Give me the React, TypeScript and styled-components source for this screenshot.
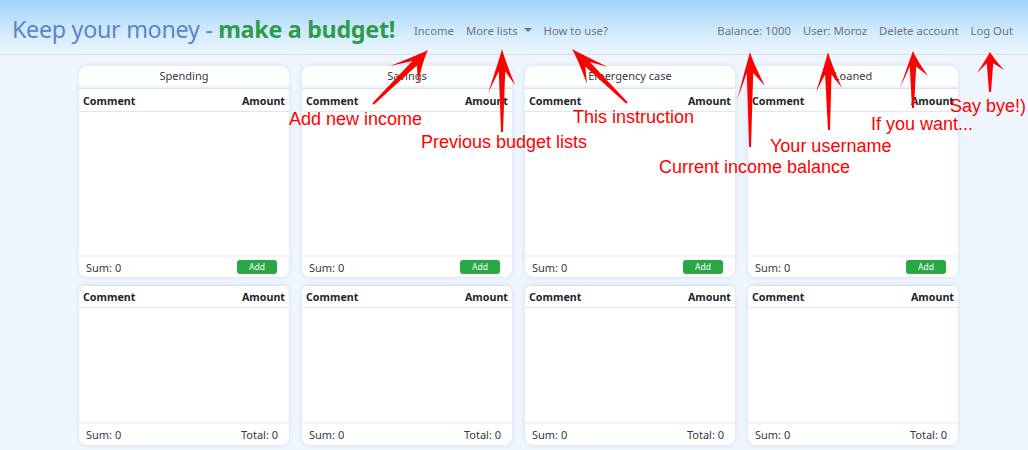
import React from "react";
import styled, { createGlobalStyle } from "styled-components";

const GlobalStyle = createGlobalStyle`
  html, body { margin: 0; padding: 0; }
  body {
    background: #eef5fd;
    font-family: "Noto Sans", "Open Sans", sans-serif;
    color: #212529;
    overflow: hidden;
  }
`;

const Page = styled.div`
  position: relative;
  width: 1028px;
  height: 450px;
  overflow: hidden;
`;

const Header = styled.header`
  height: 55px;
  box-sizing: border-box;
  border-bottom: 1px solid #d9dee4;
  background: linear-gradient(180deg, #9dd3fb 0%, #cfe9fd 55%, #eaf5fe 100%);
  display: flex;
  align-items: center;
  padding: 6px 15px 0 12px;
`;

const Brand = styled.div`
  font-size: 23.3px;
  color: #5a86c4;
  white-space: nowrap;
  margin-right: 19px;
  margin-top: -3px;
  letter-spacing: -0.3px;
`;

const BrandStrong = styled.b`
  color: #2e9b4b;
  font-weight: 700;
`;

const Nav = styled.nav<{ $right?: boolean }>`
  display: flex;
  align-items: center;
  gap: 12px;
  margin-left: ${(p) => (p.$right ? "auto" : "0")};
`;

const NavLink = styled.span`
  font-size: 11.3px;
  color: #6c757d;
  white-space: nowrap;
  display: inline-flex;
  align-items: center;
  gap: 6px;
`;

const Caret = styled.span`
  width: 0;
  height: 0;
  border-left: 4px solid transparent;
  border-right: 4px solid transparent;
  border-top: 4px solid #6c757d;
`;

const Main = styled.main`
  display: grid;
  grid-template-columns: repeat(4, 210px);
  column-gap: 13px;
  padding: 11px 0 0 79px;
`;

const Column = styled.div`
  display: flex;
  flex-direction: column;
  gap: 8px;
`;

const Card = styled.section<{ $h: number }>`
  height: ${(p) => p.$h}px;
  background: #fff;
  border-radius: 8px;
  box-shadow: 0 0 4px rgba(150, 185, 225, 0.35);
  display: flex;
  flex-direction: column;
  overflow: hidden;
`;

const CardTitle = styled.div`
  height: 20px;
  font-size: 11px;
  color: #343a40;
  text-align: center;
  line-height: 20px;
  border-bottom: 2px solid #edf3fa;
`;

const HeadRow = styled.div<{ $h: number }>`
  height: ${(p) => p.$h}px;
  box-sizing: border-box;
  border-top: 1px solid #dde2e7;
  border-bottom: 1px solid #e3e7eb;
  display: flex;
  justify-content: space-between;
  align-items: center;
  padding: 1px 4px 0;
  font-size: 10.7px;
  font-weight: 700;
  color: #212529;
`;

const Body = styled.div`
  flex: 1;
`;

const Footer = styled.div<{ $h: number }>`
  height: ${(p) => p.$h}px;
  box-sizing: border-box;
  border-top: 2px solid #eef5fd;
  display: flex;
  justify-content: space-between;
  align-items: center;
  padding: 0 11px 0 7px;
  font-size: 11px;
  color: #343a40;
`;

const AddButton = styled.button`
  width: 40px;
  height: 14px;
  border: none;
  border-radius: 3px;
  background: #28a745;
  color: #fff;
  font-family: inherit;
  font-size: 8.5px;
  line-height: 14px;
  padding: 0;
  margin-right: 1px;
`;

const Overlay = styled.svg`
  position: absolute;
  left: 0;
  top: 0;
  pointer-events: none;
`;

const Note = styled.span`
  position: absolute;
  font-family: "Liberation Sans", Arial, sans-serif;
  font-size: 18px;
  line-height: 18px;
  color: #ff0000;
  white-space: nowrap;
  pointer-events: none;
`;

type P = [number, number];
interface Arrow {
  tip: P;
  tail: P;
  a: P;
  b: P;
}

const arrows: Arrow[] = [
  { tip: [428, 50], tail: [373, 104], a: [390, 66], b: [418, 83] },
  { tip: [502, 49], tail: [502, 132], a: [488, 93], b: [515, 85] },
  { tip: [572, 49], tail: [627, 103], a: [608, 67], b: [587, 84] },
  { tip: [750, 52], tail: [750, 147], a: [737, 100], b: [765, 86] },
  { tip: [828, 52], tail: [829, 130], a: [816, 92], b: [842, 88] },
  { tip: [913, 51], tail: [913, 108], a: [900, 88], b: [928, 76] },
  { tip: [990, 52], tail: [990, 92], a: [977, 73], b: [1004, 70] },
];

function arrowPath({ tip, tail, a, b }: Arrow): string {
  const dx = tail[0] - tip[0];
  const dy = tail[1] - tip[1];
  const len = Math.hypot(dx, dy);
  const ux = dx / len;
  const uy = dy / len;
  const px = -uy;
  const py = ux;
  const proj = (q: P) => (q[0] - tip[0]) * ux + (q[1] - tip[1]) * uy;
  const side = (q: P) => (q[0] - tip[0]) * px + (q[1] - tip[1]) * py;
  const neckD = Math.min(proj(a), proj(b)) * 0.62;
  const sa = Math.sign(side(a)) || 1;
  const sb = -sa;
  const w = 3.2;
  const tw = 1;
  const pt = (d: number, s: number): P => [tip[0] + ux * d + px * s, tip[1] + uy * d + py * s];
  const neckA = pt(neckD, sa * w);
  const neckB = pt(neckD, sb * w);
  const tailA = pt(len, sa * tw);
  const tailB = pt(len, sb * tw);
  const f = (q: P) => `${q[0].toFixed(1)},${q[1].toFixed(1)}`;
  const cA = pt(neckD * 0.5, sa * 3);
  const cB = pt(neckD * 0.5, sb * 3);
  return `M${f(tip)} Q${f(cA)} ${f(a)} L${f(neckA)} L${f(tailA)} L${f(tailB)} L${f(neckB)} L${f(b)} Q${f(cB)} ${f(tip)} Z`;
}

const notes: { text: string; x: number; y: number }[] = [
  { text: "Add new income", x: 289, y: 110 },
  { text: "Previous budget lists", x: 421, y: 133 },
  { text: "This instruction", x: 573, y: 108 },
  { text: "Current income balance", x: 659, y: 158 },
  { text: "Your username", x: 770, y: 137 },
  { text: "If you want...", x: 871, y: 115 },
  { text: "Say bye!)", x: 950, y: 97 },
];

const lists = ["Spending", "Savings", "Emergency case", "Loaned"];

export default function App() {
  return (
    <Page>
      <GlobalStyle />
      <Header>
        <Brand>
          Keep your money - <BrandStrong>make a budget!</BrandStrong>
        </Brand>
        <Nav>
          <NavLink>Income</NavLink>
          <NavLink>
            More lists <Caret />
          </NavLink>
          <NavLink>How to use?</NavLink>
        </Nav>
        <Nav $right>
          <NavLink>Balance: 1000</NavLink>
          <NavLink>User: Moroz</NavLink>
          <NavLink>Delete account</NavLink>
          <NavLink>Log Out</NavLink>
        </Nav>
      </Header>
      <Main>
        {lists.map((name) => (
          <Column key={name}>
            <Card $h={211}>
              <CardTitle>{name}</CardTitle>
              <HeadRow $h={24}>
                <span>Comment</span>
                <span>Amount</span>
              </HeadRow>
              <Body />
              <Footer $h={22}>
                <span>Sum: 0</span>
                <AddButton>Add</AddButton>
              </Footer>
            </Card>
            <Card $h={160}>
              <HeadRow $h={23}>
                <span>Comment</span>
                <span>Amount</span>
              </HeadRow>
              <Body />
              <Footer $h={23}>
                <span>Sum: 0</span>
                <span>Total: 0</span>
              </Footer>
            </Card>
          </Column>
        ))}
      </Main>
      <Overlay width={1028} height={450} viewBox="0 0 1028 450">
        {arrows.map((a, i) => (
          <path key={i} d={arrowPath(a)} fill="#ff0000" />
        ))}
      </Overlay>
      {notes.map((n) => (
        <Note key={n.text} style={{ left: n.x, top: n.y }}>
          {n.text}
        </Note>
      ))}
    </Page>
  );
}
